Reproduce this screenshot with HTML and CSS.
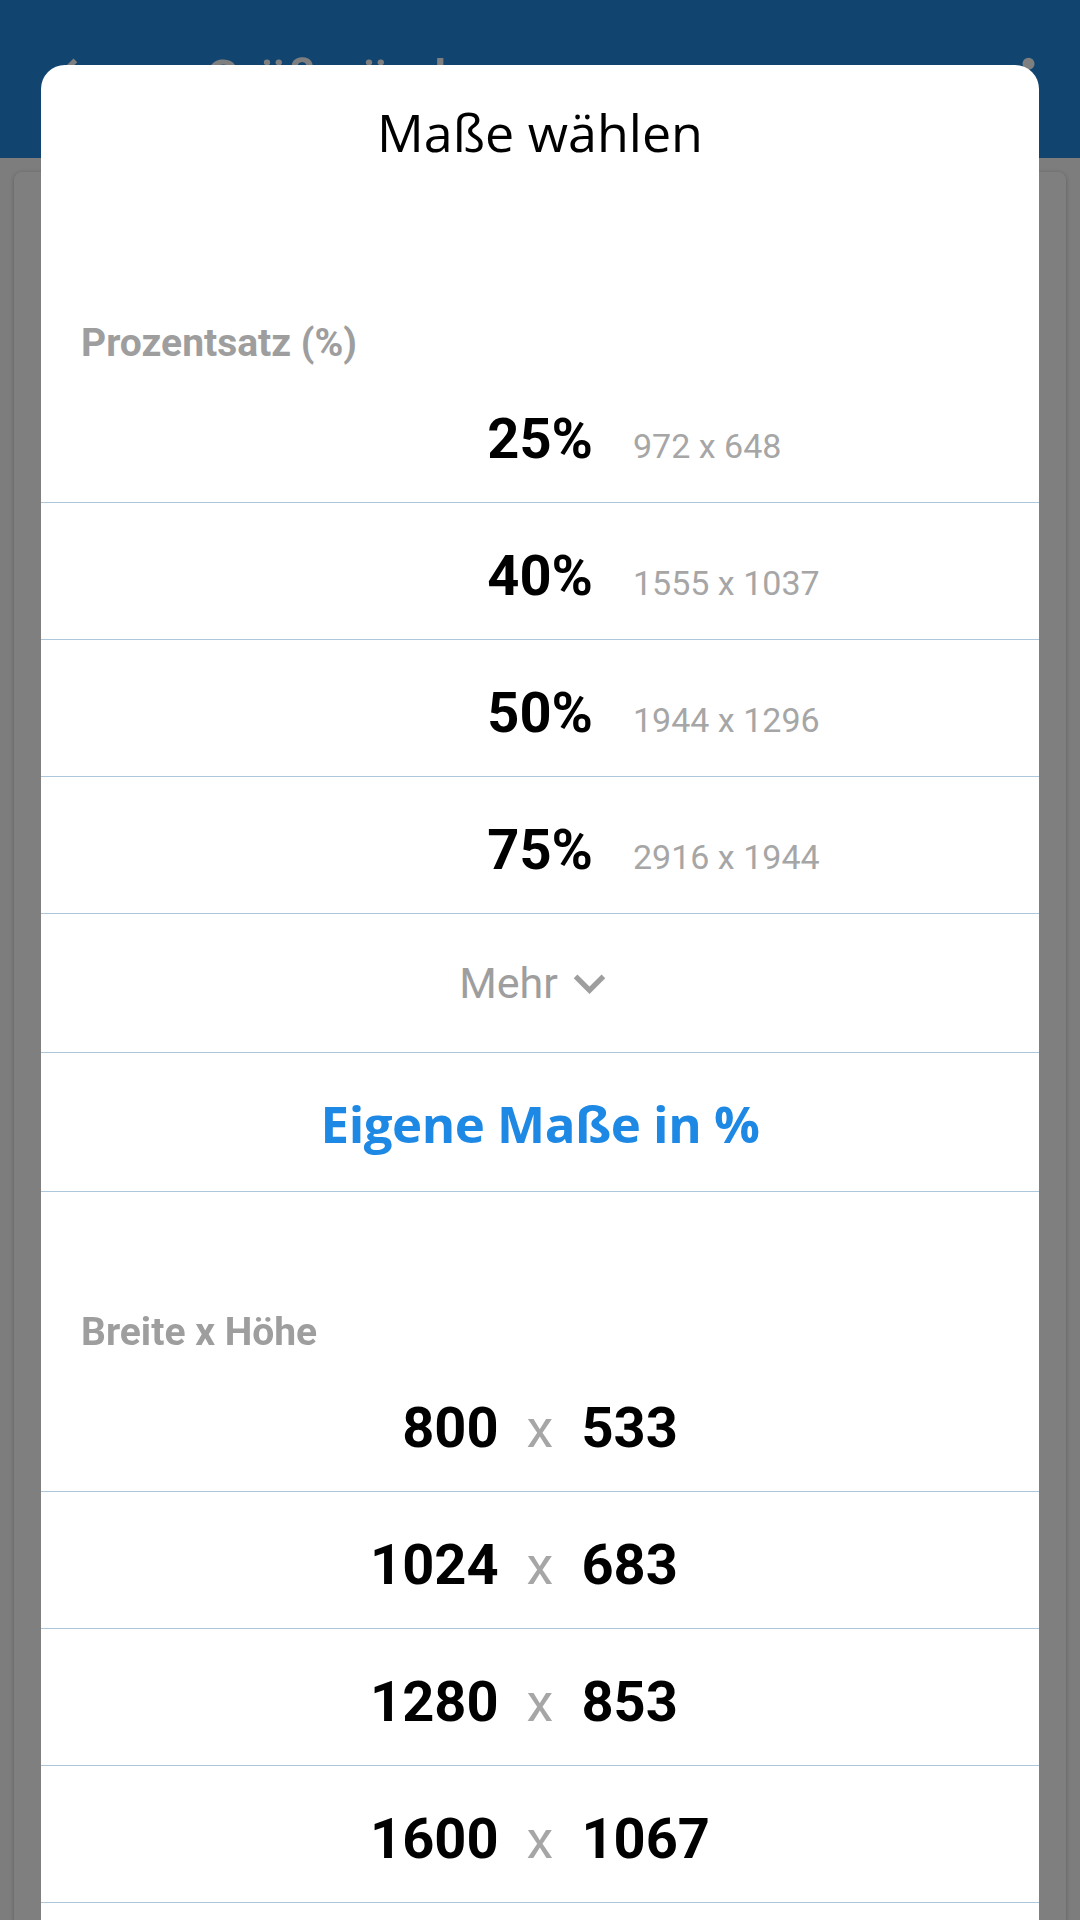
FILE: index.html
```html
<!DOCTYPE html>
<html>
<head>
<meta charset="UTF-8">
<title>Maße wählen</title>
<link rel="stylesheet" href="styles.css">
</head>
<body>
    <div class="appbar">
        <svg class="appbar-icon" viewBox="0 0 24 24"><path d="M20 11H7.83l5.59-5.59L12 4l-8 8 8 8 1.41-1.41L7.83 13H20v-2z"/></svg>
        <div class="appbar-title">Größe ändern</div>
        <svg class="appbar-icon menu" viewBox="0 0 24 24"><circle cx="12" cy="6" r="2.3"/><circle cx="12" cy="12" r="2.3"/><circle cx="12" cy="18" r="2.3"/></svg>
    </div>
    <div class="page">
        <div class="card"></div>
    </div>

    <div class="scrim"></div>

    <div class="dialog">
        <div class="dialog-title">Maße wählen</div>

        <div class="section-label">Prozentsatz (%)</div>
        <div class="pct-row">
            <span class="big">25%</span>
            <span class="sub">972 x 648</span>
        </div>
        <div class="pct-row">
            <span class="big">40%</span>
            <span class="sub">1555 x 1037</span>
        </div>
        <div class="pct-row">
            <span class="big">50%</span>
            <span class="sub">1944 x 1296</span>
        </div>
        <div class="pct-row">
            <span class="big">75%</span>
            <span class="sub">2916 x 1944</span>
        </div>
        <div class="more-row">
            <span>Mehr</span>
            <svg class="chevron" viewBox="0 0 24 24"><path d="M16.59 8.59L12 13.17 7.41 8.59 6 10l6 6 6-6z"/></svg>
        </div>
        <div class="custom-row">Eigene Maße in %</div>

        <div class="section-label second">Breite x Höhe</div>
        <div class="size-row">
            <span class="big w">800</span>
            <span class="times">x</span>
            <span class="big">533</span>
        </div>
        <div class="size-row">
            <span class="big w">1024</span>
            <span class="times">x</span>
            <span class="big">683</span>
        </div>
        <div class="size-row">
            <span class="big w">1280</span>
            <span class="times">x</span>
            <span class="big">853</span>
        </div>
        <div class="size-row">
            <span class="big w">1600</span>
            <span class="times">x</span>
            <span class="big">1067</span>
        </div>
    </div>
</body>
</html>
```

FILE: styles.css
```css
html, body {
    margin: 0;
    height: 100%;
    overflow: hidden;
}
body {
    background: #fafafa;
    font-family: Roboto, "Liberation Sans", sans-serif;
}

/* app screen behind the dialog */
.appbar {
    height: 158px;
    background: #2288de;
    display: flex;
    align-items: center;
    padding: 0 20px 0 42px;
    box-sizing: border-box;
    color: #fff;
}
.appbar-icon {
    width: 63px;
    height: 63px;
    fill: #fff;
    flex: none;
}
.appbar-title {
    flex: 1;
    margin-left: 100px;
    font-size: 52px;
    font-weight: 500;
}
.page {
    padding: 14px;
}
.card {
    height: 2000px;
    background: #fff;
    border-radius: 8px;
    box-shadow: 0 1px 4px rgba(0,0,0,0.25);
}
.scrim {
    position: fixed;
    top: 0;
    left: 0;
    right: 0;
    bottom: 0;
    background: rgba(0,0,0,0.5);
}

/* dialog */
.dialog {
    position: absolute;
    top: 65px;
    left: 41px;
    width: 998px;
    padding-bottom: 120px;
    background: #fff;
    border-radius: 24px 24px 0 0;
}
.dialog-title {
    padding-top: 31px;
    font-family: "Open Sans", sans-serif;
    font-size: 52px;
    line-height: 71px;
    text-align: center;
    color: #000;
}
.section-label {
    margin-top: 153px;
    padding-left: 40px;
    font-size: 39px;
    line-height: 46px;
    font-weight: bold;
    color: #9e9e9e;
}
.section-label.second {
    margin-top: 117px;
}
.big {
    font-size: 56px;
    line-height: 64px;
    font-weight: bold;
    color: #000;
}
.pct-row {
    display: grid;
    grid-template-columns: 552px 1fr;
    column-gap: 40px;
    align-items: baseline;
    height: 137px;
    box-sizing: border-box;
    padding-top: 41px;
    border-bottom: 1px solid #adc6d9;
}
.pct-row .big {
    text-align: right;
}
.sub {
    font-size: 34px;
    color: #a6a6a6;
}
.more-row {
    display: flex;
    justify-content: center;
    align-items: center;
    height: 139px;
    box-sizing: border-box;
    border-bottom: 1px solid #adc6d9;
    font-size: 43px;
    line-height: 50px;
    color: #9e9e9e;
}
.chevron {
    width: 63px;
    height: 63px;
    fill: #9e9e9e;
}
.custom-row {
    height: 139px;
    box-sizing: border-box;
    padding-top: 35px;
    border-bottom: 1px solid #adc6d9;
    text-align: center;
    font-family: "Open Sans", sans-serif;
    font-size: 51px;
    line-height: 70px;
    font-weight: bold;
    letter-spacing: -0.5px;
    color: #1e88e5;
}
.size-row {
    display: grid;
    grid-template-columns: 1fr auto 1fr;
    column-gap: 28px;
    align-items: baseline;
    height: 137px;
    box-sizing: border-box;
    padding-top: 41px;
    border-bottom: 1px solid #adc6d9;
}
.size-row .w {
    text-align: right;
}
.times {
    font-size: 54px;
    line-height: 64px;
    color: #a6a6a6;
}
```
